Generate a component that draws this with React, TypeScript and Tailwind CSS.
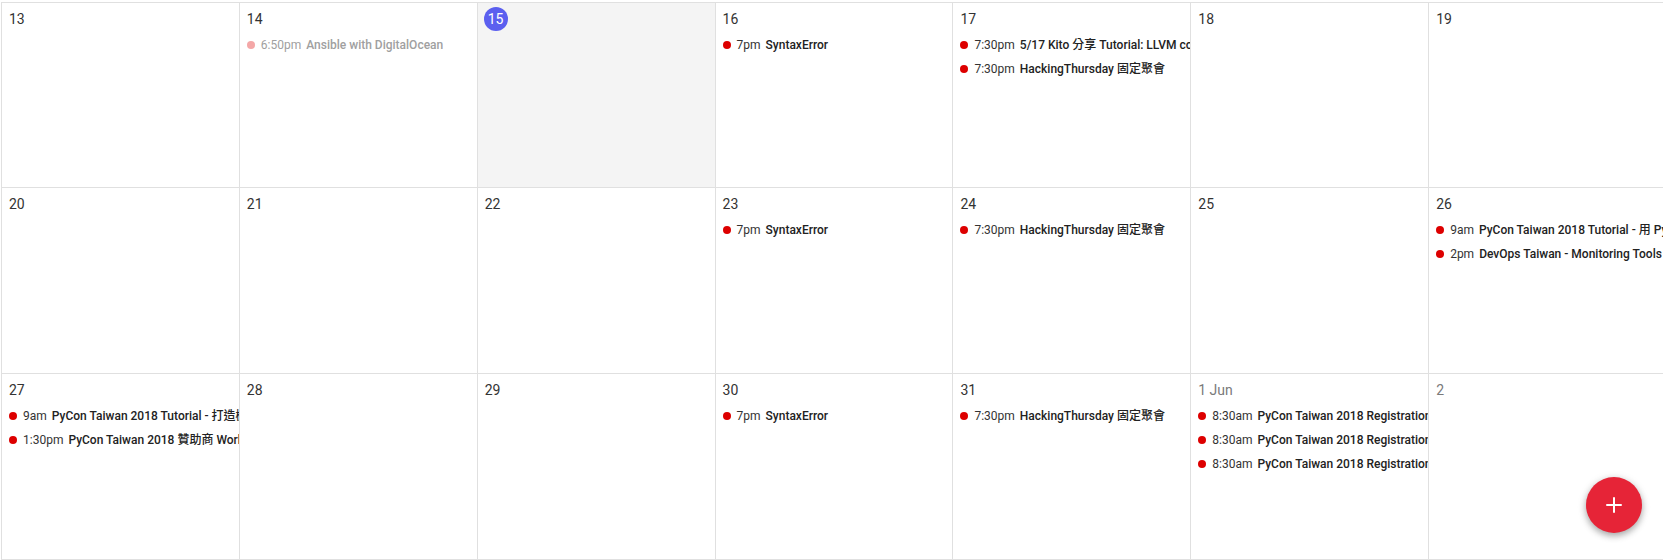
import { Plus } from 'lucide-react'

type CalEvent = {
    time: string
    title: string
    past?: boolean
}

type Day = {
    label: string
    muted?: boolean
    today?: boolean
    events: CalEvent[]
}

const WEEKS: Day[][] = [
    [
        { label: '13', events: [] },
        { label: '14', events: [{ time: '6:50pm', title: 'Ansible with DigitalOcean', past: true }] },
        { label: '15', today: true, events: [] },
        { label: '16', events: [{ time: '7pm', title: 'SyntaxError' }] },
        {
            label: '17',
            events: [
                { time: '7:30pm', title: '5/17 Kito 分享 Tutorial: LLVM compiler infrastructure' },
                { time: '7:30pm', title: 'HackingThursday 固定聚會' },
            ],
        },
        { label: '18', events: [] },
        { label: '19', events: [] },
    ],
    [
        { label: '20', events: [] },
        { label: '21', events: [] },
        { label: '22', events: [] },
        { label: '23', events: [{ time: '7pm', title: 'SyntaxError' }] },
        { label: '24', events: [{ time: '7:30pm', title: 'HackingThursday 固定聚會' }] },
        { label: '25', events: [] },
        {
            label: '26',
            events: [
                { time: '9am', title: 'PyCon Taiwan 2018 Tutorial - 用 Python 做資料分析' },
                { time: '2pm', title: 'DevOps Taiwan - Monitoring Tools 大亂鬥' },
            ],
        },
    ],
    [
        {
            label: '27',
            events: [
                { time: '9am', title: 'PyCon Taiwan 2018 Tutorial - 打造機器學習應用' },
                { time: '1:30pm', title: 'PyCon Taiwan 2018 贊助商 Workshop' },
            ],
        },
        { label: '28', events: [] },
        { label: '29', events: [] },
        { label: '30', events: [{ time: '7pm', title: 'SyntaxError' }] },
        { label: '31', events: [{ time: '7:30pm', title: 'HackingThursday 固定聚會' }] },
        {
            label: '1 Jun',
            muted: true,
            events: [
                { time: '8:30am', title: 'PyCon Taiwan 2018 Registration Day 1' },
                { time: '8:30am', title: 'PyCon Taiwan 2018 Registration Day 2' },
                { time: '8:30am', title: 'PyCon Taiwan 2018 Registration Day 3' },
            ],
        },
        { label: '2', muted: true, events: [] },
    ],
]

// row heights so the grid lines land where the screenshot has them
const ROW_HEIGHTS = ['h-[185px]', 'h-[186px]', 'h-[187px] border-b']

function EventRow({ event }: { event: CalEvent }) {
    return (
        <div className="flex h-6 items-center gap-[6px] overflow-hidden whitespace-nowrap pr-1 text-[12px] leading-4">
            <span
                className={`h-2 w-2 shrink-0 rounded-full ${event.past ? 'bg-[#f4a7a7]' : 'bg-[#dd0000]'}`}
            />
            <span className={event.past ? 'text-[#a0a0a0]' : 'text-[#333333]'}>{event.time}</span>
            <span className={`-ml-[1px] font-medium ${event.past ? 'text-[#a0a0a0]' : 'text-[#222222]'}`}>
                {event.title}
            </span>
        </div>
    )
}

function DayCell({ day, rowClass }: { day: Day; rowClass: string }) {
    return (
        <div
            className={`min-w-0 overflow-hidden border-t border-l border-[#e0e0e0] pt-[6px] pl-[7px] ${rowClass} ${day.today ? 'bg-[#f4f4f4]' : 'bg-white'}`}
        >
            <div className="h-5 text-[14px] leading-5">
                {day.today ? (
                    <span className="relative ml-[3px] inline-block">
                        <span className="absolute -top-[2px] -left-[4px] h-6 w-6 rounded-full bg-[#5b5fef]" />
                        <span className="relative text-white">{day.label}</span>
                    </span>
                ) : (
                    <span className={day.muted ? 'text-[#7a7a7a]' : 'text-[#333333]'}>{day.label}</span>
                )}
            </div>
            <div className="mt-1">
                {day.events.map((ev, i) => (
                    <EventRow key={i} event={ev} />
                ))}
            </div>
        </div>
    )
}

export default function App() {
    return (
        <div
            className="relative h-[560px] w-[1663px] overflow-hidden bg-white pt-[2px]"
            style={{ fontFamily: 'Roboto, "Noto Sans CJK TC", sans-serif' }}
        >
            <div className="ml-[1px] w-[1665px]">
                {WEEKS.map((week, w) => (
                    <div key={w} className="grid grid-cols-7">
                        {week.map((day) => (
                            <DayCell key={day.label} day={day} rowClass={`${ROW_HEIGHTS[w]} border-[#e0e0e0]`} />
                        ))}
                    </div>
                ))}
            </div>

            {/* Floating add button */}
            <button className="absolute right-[21px] bottom-[27px] flex h-14 w-14 items-center justify-center rounded-full bg-[#e62437] shadow-[0_3px_6px_rgba(0,0,0,0.25),0_2px_10px_rgba(0,0,0,0.15)]">
                <Plus className="h-6 w-6 text-white" strokeWidth={2} />
            </button>
        </div>
    )
}
